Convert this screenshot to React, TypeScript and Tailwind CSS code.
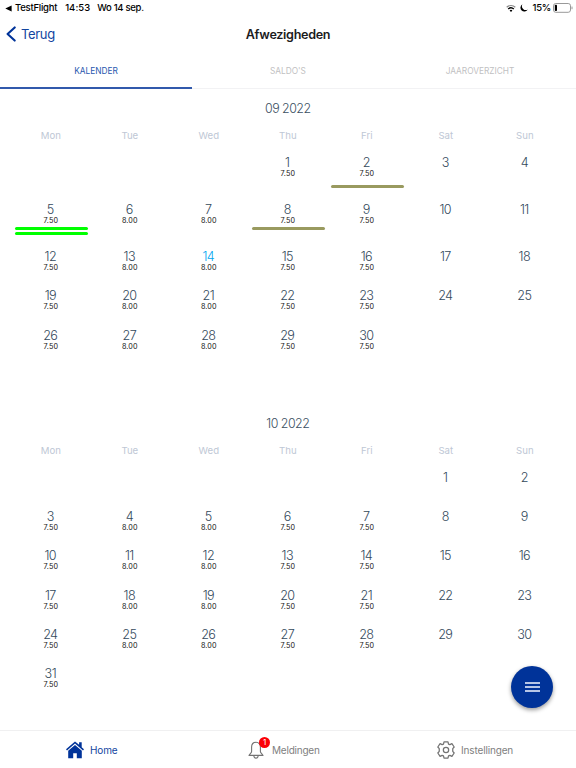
import React from 'react';

type Row = { h: string; days: number[] };

const weekdays = ['Mon', 'Tue', 'Wed', 'Thu', 'Fri', 'Sat', 'Sun'];

const september: Row[] = [
  { h: 'h-[47px]', days: [0, 0, 0, 1, 2, 3, 4] },
  { h: 'h-[47px]', days: [5, 6, 7, 8, 9, 10, 11] },
  { h: 'h-[39.3px]', days: [12, 13, 14, 15, 16, 17, 18] },
  { h: 'h-[39.3px]', days: [19, 20, 21, 22, 23, 24, 25] },
  { h: 'h-[39.3px]', days: [26, 27, 28, 29, 30, 0, 0] },
];

const october: Row[] = [
  { h: 'h-[39.3px]', days: [0, 0, 0, 0, 0, 1, 2] },
  { h: 'h-[39.3px]', days: [3, 4, 5, 6, 7, 8, 9] },
  { h: 'h-[39.3px]', days: [10, 11, 12, 13, 14, 15, 16] },
  { h: 'h-[39.3px]', days: [17, 18, 19, 20, 21, 22, 23] },
  { h: 'h-[39.3px]', days: [24, 25, 26, 27, 28, 29, 30] },
  { h: 'h-[39.3px]', days: [31, 0, 0, 0, 0, 0, 0] },
];

const marks: Record<number, string[]> = {
  2: ['mt-[6px] bg-[#999a5f]'],
  5: ['mt-[1px] bg-[#00ff00]', 'mt-[1.5px] bg-[#00ff00]'],
  8: ['mt-[1px] bg-[#999a5f]'],
};

function Month({ title, rows, current }: { title: string; rows: Row[]; current?: boolean }) {
  return (
    <section className="h-[314.7px] pr-[11.7px] pl-[11.3px]">
      <h2 className="h-[38px] pt-[10px] text-center text-[12.4px] leading-5 font-light tracking-[-0.5px] text-[#3b5062]">{title}</h2>
      <div className="grid h-[26px] grid-cols-7 text-center text-[9.6px] leading-[18px] text-[#bec7d5]">
        {weekdays.map((d) => <span key={d}>{d}</span>)}
      </div>
      {rows.map((row, i) => (
        <div key={i} className={`grid grid-cols-7 ${row.h}`}>
          {row.days.map((d, c) => (
            <div key={c} className="flex flex-col items-center pt-px">
              {d > 0 && (
                <>
                  <span className={`mr-px h-4 text-[12.6px] leading-[18px] font-light tracking-[-0.6px] ${current && d === 14 ? 'text-[#00a5f0]' : 'text-[#33495b]'}`}>{d}</span>
                  {c < 5 && <span className="h-[9px] text-[7.2px] leading-[8px] tracking-[0.15px] text-[#111]">{c === 1 || c === 2 ? '8.00' : '7.50'}</span>}
                  {current && marks[d]?.map((m, k) => <div key={k} className={`ml-[0.6px] h-[3px] w-[73px] shrink-0 rounded-full ${m}`} />)}
                </>
              )}
            </div>
          ))}
        </div>
      ))}
    </section>
  );
}

function HomeIcon() {
  return (
    <svg className="h-[18px] w-[18px]" viewBox="0 0 18 18" fill="#003399">
      <path d="M9 3.9 2.2 9.8v7.5h5v-5h3.6v5h5V9.8L9 3.9Z" />
      <path d="M9 .5 0 8.3l1 1.1 8-6.9 8 6.9 1-1.1-2.3-2V1.3h-2.6v2.4L9 .5Z" />
    </svg>
  );
}

function BellIcon() {
  return (
    <svg className="h-[18px] w-4" viewBox="0 0 16 18" fill="none" stroke="#737373" strokeWidth="1.1" strokeLinejoin="round">
      <path d="M8 1.2c-2.8 0-4.4 2-4.4 4.8v4.5c0 1.5-2.1 2.3-2.6 3.9h14c-.5-1.6-2.6-2.4-2.6-3.9V6c0-2.8-1.6-4.8-4.4-4.8ZM5.8 14.7c.2 1.6 1 2.4 2.2 2.4s2-.8 2.2-2.4" />
    </svg>
  );
}

function GearIcon() {
  return (
    <svg className="h-5 w-5" viewBox="0 0 24 24" fill="none" stroke="#737373" strokeWidth="1.5" strokeLinejoin="round">
      <path d="M9.6 2.2h4.8l.6 2.7 1.7.7 2.4-1.2 2.7 4-1.7 2v3.2l1.7 2-2.7 4-2.4-1.2-1.7.7-.6 2.7H9.6L9 19.1l-1.7-.7-2.4 1.2-2.7-4 1.7-2v-3.2l-1.7-2 2.7-4 2.4 1.2L9 4.9Z" />
      <circle cx="12" cy="12" r="3.2" />
    </svg>
  );
}

export default function App() {
  return (
    <div className="relative flex h-[768px] w-[576px] flex-col overflow-hidden bg-white font-['Inter','Liberation_Sans',sans-serif]">
      <div className="flex h-4 shrink-0 items-center justify-between pr-[3px] pl-[5px] text-[9.5px] font-medium tracking-[-0.25px] text-black">
        <div className="flex items-center">
          <svg className="mr-[3px] h-[7px] w-[7px]" viewBox="0 0 7 7"><path d="M.3 3.5 6.6.6v5.8Z" /></svg>
          <span>TestFlight</span>
          <span className="ml-2 tracking-[0.05px]">14:53</span>
          <span className="ml-[7px] tracking-[-0.3px]">Wo 14 sep.</span>
        </div>
        <div className="flex items-center">
          <svg className="mr-1 h-[9px] w-[10px]" viewBox="0 0 10 9" fill="none">
            <path d="M.7 3.2a6.3 6.3 0 0 1 8.6 0" stroke="#888" strokeWidth="1.2" />
            <path d="M2.2 5.1a4.1 4.1 0 0 1 5.6 0" stroke="#000" strokeWidth="1.4" />
            <path d="M3.6 6.5a2.1 2.1 0 0 1 2.8 0L5 8Z" fill="#000" />
          </svg>
          <svg className="mr-1 h-2 w-2" viewBox="0 0 8 8"><path d="M2.4.3A3.9 3.9 0 1 0 7.8 5.5 3.9 3.9 0 0 1 2.4.3Z" /></svg>
          <span>15%</span>
          <svg className="ml-[2px] h-[10px] w-5" viewBox="0 0 20 10" fill="none">
            <rect x=".5" y=".5" width="17" height="8.8" rx="2.3" stroke="#999" />
            <rect x="1.8" y="1.8" width="2.2" height="6.2" rx=".8" fill="#000" />
            <path d="M19 3.6v2.6" stroke="#999" />
          </svg>
        </div>
      </div>
      <header className="grid h-9 shrink-0 grid-cols-3 items-center pt-[2px]">
        <div className="-mt-[2px] flex items-center pl-[6px] text-[13px] tracking-[-0.35px] text-[#12459f]">
          <svg className="mr-[5px] h-4 w-[10px]" viewBox="0 0 10 16" fill="none" stroke="#003399" strokeWidth="2.1" strokeLinecap="round" strokeLinejoin="round"><path d="M8.7 1.4 1.6 8l7.1 6.6" /></svg>
          <span className="pt-px">Terug</span>
        </div>
        <h1 className="text-center text-[12.6px] font-semibold tracking-[-0.32px] text-[#1b1b1d]">Afwezigheden</h1>
      </header>
      <nav className="grid h-[37px] shrink-0 grid-cols-3 border-b border-[#f2f2f4] text-center text-[8.3px] leading-[38px]">
        <span className="h-[37px] border-b-2 border-[#3159ac] text-[#2858ae]">KALENDER</span>
        <span className="text-[#bfbfc2]">SALDO'S</span>
        <span className="text-[#bfbfc2]">JAAROVERZICHT</span>
      </nav>
      <main className="min-h-0 flex-1 overflow-hidden">
        <Month title="09 2022" rows={september} current />
        <Month title="10 2022" rows={october} />
      </main>
      <footer className="grid h-[38px] shrink-0 grid-cols-3 border-t border-[#f0f0f1] pt-px text-[10px] tracking-[-0.15px] text-[#808080]">
        <div className="flex items-center pl-[66px] text-[#12459f]"><HomeIcon /><span className="ml-[6px]">Home</span></div>
        <div className="flex items-center pl-[56px]">
          <div className="relative h-[18px]">
            <BellIcon />
            <span className="absolute -top-[4px] left-[11px] h-[11px] w-[11px] rounded-full bg-[#fb0007] text-center text-[8px] leading-[11px] text-white">1</span>
          </div>
          <span className="ml-[8px] tracking-[-0.22px]">Meldingen</span>
        </div>
        <div className="flex items-center pl-[52px]"><GearIcon /><span className="ml-[5px]">Instellingen</span></div>
      </footer>
      <button className="absolute top-[666px] left-[511px] flex h-[42px] w-[42px] items-center justify-center rounded-full bg-[#003399] shadow-[0_2px_4px_rgba(0,0,0,0.4)]" aria-label="Menu">
        <svg className="h-3 w-[15px]" viewBox="0 0 15 12" stroke="#f2f7ff" strokeWidth="1.7"><path d="M0 2h15M0 6h15M0 10h15" /></svg>
      </button>
    </div>
  );
}
